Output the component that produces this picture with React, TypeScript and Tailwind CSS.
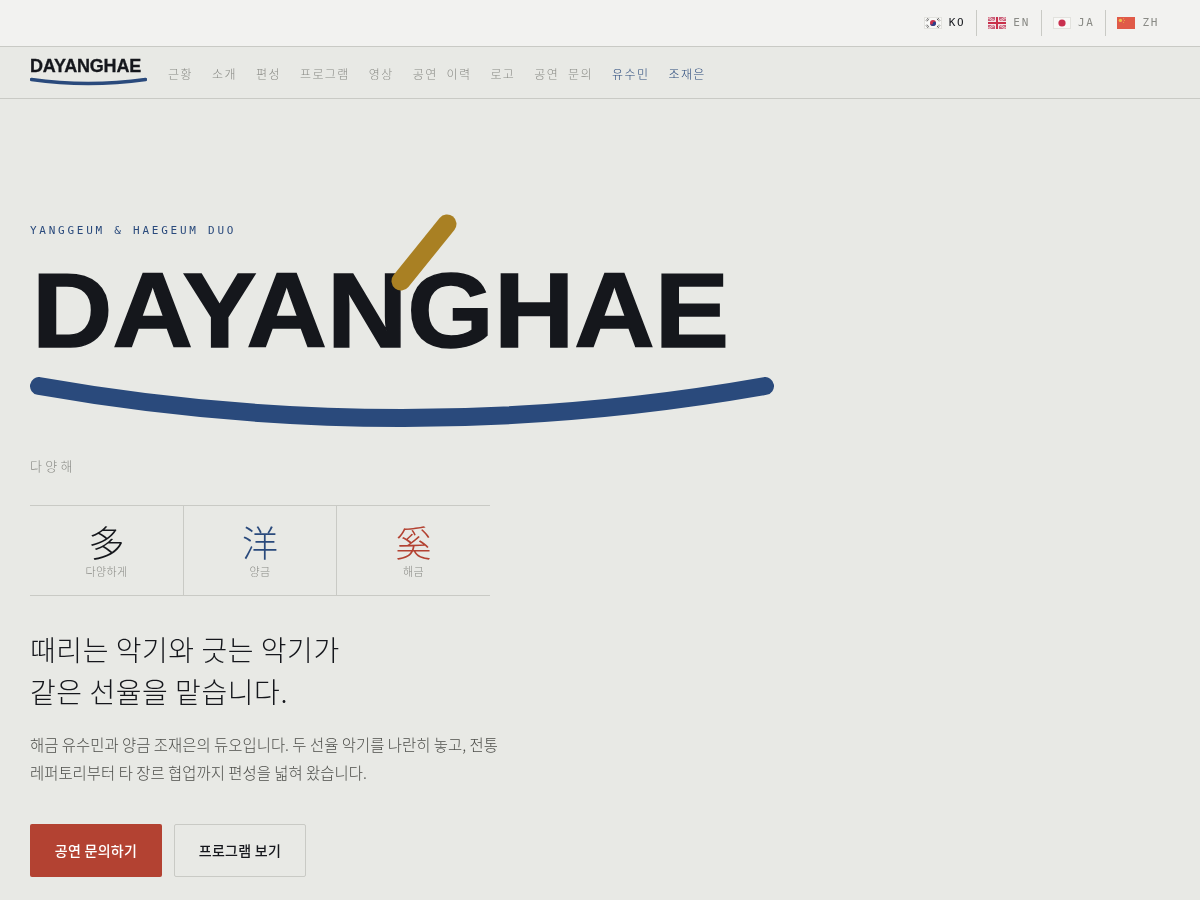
const mono = "font-['DejaVu_Sans_Mono','Noto_Sans_CJK_KR',monospace]";

function FlagKo() {
  return (
    <svg width="18" height="12" viewBox="0 0 18 12">
      <rect x=".5" y=".5" width="17" height="11" fill="#f8f8f6" stroke="#e2e2de" />
      <circle cx="9" cy="6" r="3" fill="#c9304a" />
      <path d="M6 6a3 3 0 0 0 6 0a1.5 1.5 0 0 0-3 0a1.5 1.5 0 0 1-3 0z" fill="#27408b" />
      <g stroke="#555" strokeWidth="1" strokeDasharray="1.5 .6">
        <path d="M2 3.5l2-2.4M3 4.3l2-2.4M13 1.9l2 2.4M14 1.1l2 2.4M2 8.5l2 2.4M3 7.7l2 2.4M13 10.1l2-2.4M14 10.9l2-2.4" />
      </g>
    </svg>
  );
}

function FlagEn() {
  return (
    <svg width="18" height="12" viewBox="0 0 18 12">
      <rect width="18" height="12" fill="#c9607a" />
      <path d="M0 0l18 12M18 0L0 12" stroke="#f2e6ea" strokeWidth="2" />
      <path d="M0 0l18 12M18 0L0 12" stroke="#c9304a" strokeWidth=".7" />
      <path d="M9 0v12M0 6h18" stroke="#f2e6ea" strokeWidth="4" />
      <path d="M9 0v12M0 6h18" stroke="#c9304a" strokeWidth="2" />
    </svg>
  );
}

function FlagJa() {
  return (
    <svg width="18" height="12" viewBox="0 0 18 12">
      <rect x=".5" y=".5" width="17" height="11" fill="#f8f8f6" stroke="#e2e2de" />
      <circle cx="9" cy="6" r="3.6" fill="#c9304f" />
    </svg>
  );
}

function FlagZh() {
  return (
    <svg width="18" height="12" viewBox="0 0 18 12">
      <rect width="18" height="12" fill="#e05a48" />
      <circle cx="3.4" cy="3.4" r="1.7" fill="#eec04c" />
      <circle cx="6.6" cy="1.8" r=".5" fill="#eec04c" />
      <circle cx="7.4" cy="3.4" r=".5" fill="#eec04c" />
      <circle cx="6.6" cy="5.2" r=".5" fill="#eec04c" />
    </svg>
  );
}

const langs = [
  { code: 'KO', flag: <FlagKo />, active: true },
  { code: 'EN', flag: <FlagEn />, active: false },
  { code: 'JA', flag: <FlagJa />, active: false },
  { code: 'ZH', flag: <FlagZh />, active: false },
];

const navItems = ['근황', '소개', '편성', '프로그램', '영상', '공연 이력', '로고', '공연 문의'];

const hanja = [
  { char: '多', label: '다양하게', color: 'text-[#15171c]' },
  { char: '洋', label: '양금', color: 'text-[#2a4a7c]' },
  { char: '奚', label: '해금', color: 'text-[#b34232]' },
];

export default function App() {
  return (
    <div className="min-h-[900px] bg-[#e8e9e5] font-['Noto_Sans_CJK_KR','Noto_Sans',sans-serif] text-[#15171c] will-change-transform">
      {/* Language bar */}
      <div className="flex h-[47px] items-center justify-end border-b border-[#c9cac5] bg-[#f2f2f0] pr-[30px]">
        {langs.map((l, i) => (
          <div
            key={l.code}
            className={`flex h-[26px] items-center gap-[7px] pr-[11px] ${i > 0 ? 'border-l border-[#c9cac5] pl-[11px]' : ''}`}
          >
            {l.flag}
            <span
              className={`${mono} text-[11px] tracking-[0.15em] ${l.active ? 'text-[#15171c]' : 'text-[#8a8b86]'}`}
            >
              {l.code}
            </span>
          </div>
        ))}
      </div>

      {/* Nav */}
      <div className="flex h-[52px] items-center gap-[21px] border-b border-[#c9cac5] pl-[30px]">
        <div className="mt-[-4px] w-[117px]">
          <div className="font-['Liberation_Sans',sans-serif] text-[18px] leading-[20px] font-bold tracking-[-0.01em] whitespace-nowrap [-webkit-text-stroke:0.3px_#15171c]">
            DAYANGHAE
          </div>
          <svg width="117" height="10" viewBox="0 0 117 10" className="block">
            <path d="M1.5 3.5Q58 11.5 115.5 3.5" fill="none" stroke="#2a4a7c" strokeWidth="3.5" strokeLinecap="round" />
          </svg>
        </div>
        <nav className={`${mono} mt-[4px] flex items-center gap-[19px] text-[12px] font-light tracking-[0.12em] text-[#8a8b86]`}>
          {navItems.map((n) => (
            <span key={n}>{n}</span>
          ))}
          <span className="text-[#2a4a7c]">유수민</span>
          <span className="text-[#2a4a7c]">조재은</span>
        </nav>
      </div>

      {/* Hero */}
      <div className="px-[30px] pt-[124px]">
        <div className={`${mono} text-[11px] leading-[16px] tracking-[0.25em] text-[#2a4a7c]`}>
          YANGGEUM &amp; HAEGEUM DUO
        </div>

        <div className="relative mt-[15px] w-[744px]">
          <h1 className="ml-[2px] origin-left scale-x-[1.05] font-['Liberation_Sans',sans-serif] text-[106px] leading-[112px] font-bold whitespace-nowrap [-webkit-text-stroke:1.5px_#15171c]">
            DAYANGHAE
          </h1>
          <svg width="70" height="90" viewBox="0 0 70 90" className="absolute top-[-42px] left-[358px]">
            <path d="M13 69L59 12" fill="none" stroke="#a98023" strokeWidth="19" strokeLinecap="round" />
          </svg>
          <svg width="744" height="50" viewBox="0 0 744 50" className="mt-[11px] block">
            <path d="M9 9Q372 73 735 9" fill="none" stroke="#2a4a7c" strokeWidth="18" strokeLinecap="round" />
          </svg>
        </div>

        <div className="mt-[30px] text-[13px] leading-[18px] font-light tracking-[0.25em] text-[#8a8b86]">다양해</div>

        <div className="mt-[30px] grid w-[460px] grid-cols-[154px_153px_153px] border-y border-[#c9cac5]">
          {hanja.map((h, i) => (
            <div
              key={h.char}
              className={`flex h-[89px] flex-col items-center pt-[15px] ${i < 2 ? 'border-r border-[#c9cac5]' : ''}`}
            >
              <span className={`text-[36px] leading-[40px] font-light ${h.color}`}>{h.char}</span>
              <span className="mt-[3px] text-[11px] leading-[14px] font-light tracking-[0.04em] text-[#8a8b86]">{h.label}</span>
            </div>
          ))}
        </div>

        <p className="mt-[32px] text-[28px] leading-[42px] font-light tracking-[0.02em]">
          때리는 악기와 긋는 악기가
          <br />
          같은 선율을 맡습니다.
        </p>

        <p className="mt-[18px] text-[15.45px] leading-[28px] font-light text-[#4d4e4a]">
          해금 유수민과 양금 조재은의 듀오입니다. 두 선율 악기를 나란히 놓고, 전통
          <br />
          레퍼토리부터 타 장르 협업까지 편성을 넓혀 왔습니다.
        </p>

        <div className="mt-[38px] flex gap-[12px]">
          <a className="flex h-[53px] w-[132px] items-center justify-center rounded-[2px] bg-[#b34232] text-[14px] font-medium tracking-[0.02em] text-white">
            공연 문의하기
          </a>
          <a className="flex h-[53px] w-[132px] items-center justify-center rounded-[2px] border border-[#c9cac5] text-[14px] font-medium tracking-[0.02em] text-[#15171c]">
            프로그램 보기
          </a>
        </div>
      </div>
    </div>
  );
}
